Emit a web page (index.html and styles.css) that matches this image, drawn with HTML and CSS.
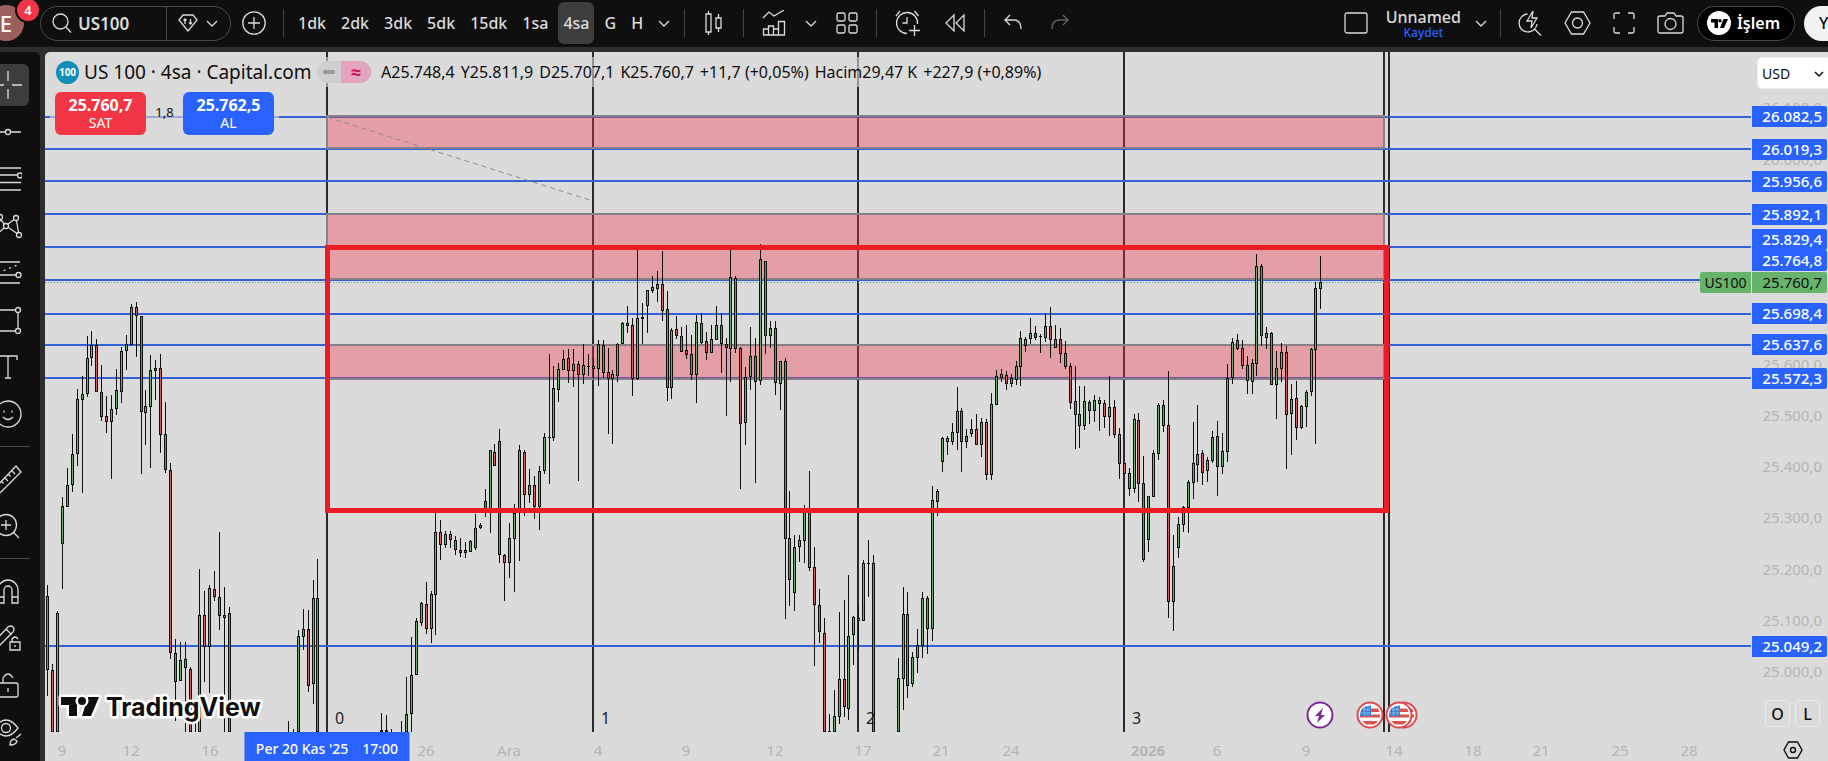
FILE: index.html
```html
<!DOCTYPE html>
<html lang="tr">
<head>
<meta charset="utf-8">
<title>US100 25.760,7</title>
<link rel="stylesheet" href="styles.css">
</head>
<body>
<header class="topbar">
  <button class="avatar" aria-label="Hesap">E<span class="badge">4</span></button>
  <div class="search">
    <button class="search-symbol">
      <svg width="20" height="22" viewBox="0 0 20 22"><circle cx="8.500" cy="9.500" r="7.500"/><path d="M14 15l5 5.500"/></svg>
      US100
    </button>
    <button class="search-more" aria-label="Semboller">
      <svg width="20" height="18" viewBox="0 0 20 18"><path d="M5 1h10l4 5-9 11L1 6z"/><path d="M7 10V5M5.500 6.500L7 5l1.500 1.500M12.500 5v5M11 8.500l1.500 1.500L14 8.500"/></svg>
      <svg width="12" height="12" viewBox="0 0 12 12"><path d="M1 4l5 5 5-5"/></svg>
    </button>
  </div>
  <button class="tool add" aria-label="Ekle"><svg width="24" height="24" viewBox="0 0 24 24"><circle cx="12" cy="12" r="11.200"/><path d="M12 6v12M6 12h12"/></svg></button>
  <i class="sep"></i>
  <button class="interval">1dk</button>
  <button class="interval">2dk</button>
  <button class="interval">3dk</button>
  <button class="interval">5dk</button>
  <button class="interval">15dk</button>
  <button class="interval">1sa</button>
  <button class="interval active">4sa</button>
  <button class="interval">G</button>
  <button class="interval">H</button>
  <button class="chev" aria-label="Aralıklar"><svg width="12" height="12" viewBox="0 0 12 12"><path d="M1 4l5 5 5-5"/></svg></button>
  <i class="sep"></i>
  <button class="tool" aria-label="Mumlar"><svg width="22" height="26" viewBox="0 0 22 26"><path d="M3 4h5v18H3zM5.500 1v3M5.500 22v3M13 8h5v10h-5zM15.500 4v4M15.500 18v4"/></svg></button>
  <i class="sep"></i>
  <button class="tool" aria-label="Göstergeler"><svg width="24" height="26" viewBox="0 0 24 26"><path d="M1 8l6-6 5 4 10-6M1.500 25v-6h5v6M6.500 25V16h5v9M11.500 25v-6h5M16.500 25V11.500h6V25zM1 25h21"/></svg></button>
  <button class="chev" aria-label="Favoriler"><svg width="12" height="12" viewBox="0 0 12 12"><path d="M1 4l5 5 5-5"/></svg></button>
  <button class="tool" aria-label="Şablonlar"><svg width="22" height="22" viewBox="0 0 22 22"><rect x="1" y="1" width="8" height="8" rx="1.500"/><rect x="13" y="1" width="8" height="8" rx="1.500"/><rect x="1" y="13" width="8" height="8" rx="1.500"/><rect x="13" y="13" width="8" height="8" rx="1.500"/></svg></button>
  <i class="sep"></i>
  <button class="tool" aria-label="Alarm"><svg width="26" height="26" viewBox="0 0 26 26"><path d="M12 23.500A10.500 10.500 0 1 1 22.500 14M12 7v6H7.500M1 6l4-5M23.500 6l-4-5M19.500 15v11M14 20.500h11"/></svg></button>
  <button class="tool" aria-label="Tekrar"><svg width="22" height="22" viewBox="0 0 22 22"><path d="M10 3v16L2 11zM20 3v16l-8-8z"/></svg></button>
  <i class="sep"></i>
  <button class="tool" aria-label="Geri al"><svg width="22" height="20" viewBox="0 0 22 20"><path d="M7 2L2 7l5 5M2 7h9c5 0 7 3 7 9"/></svg></button>
  <button class="tool dim" aria-label="Yinele"><svg width="22" height="20" viewBox="0 0 22 20"><path d="M15 2l5 5-5 5M20 7h-9c-5 0-7 3-7 9"/></svg></button>

  <div class="topbar-right">
    <button class="tool" aria-label="Yerleşim"><svg width="24" height="22" viewBox="0 0 24 22"><rect x="1" y="1" width="22" height="20" rx="2"/></svg></button>
    <button class="layout-name">Unnamed<span>Kaydet</span></button>
    <button class="chev" aria-label="Yerleşimler"><svg width="12" height="12" viewBox="0 0 12 12"><path d="M1 4l5 5 5-5"/></svg></button>
    <i class="sep"></i>
    <button class="tool" aria-label="Hızlı arama"><svg width="24" height="26" viewBox="0 0 24 26"><path d="M9.500 4A9 9 0 1 0 19 14M16.500 19l6.500 6.500M15 1l-6 10h5l-1 7 6-10h-5z"/></svg></button>
    <button class="tool" aria-label="Ayarlar"><svg width="27" height="24" viewBox="0 0 27 24"><path d="M7.500 1h12l6.500 11-6.500 11h-12L1 12z"/><circle cx="13.500" cy="12" r="5"/></svg></button>
    <button class="tool" aria-label="Tam ekran"><svg width="22" height="22" viewBox="0 0 22 22"><path d="M1 7V3q0-2 2-2h4M15 1h4q2 0 2 2v4M21 15v4q0 2-2 2h-4M7 21H3q-2 0-2-2v-4"/></svg></button>
    <button class="tool" aria-label="Fotoğraf"><svg width="27" height="22" viewBox="0 0 27 22"><path d="M3 4h5l2-3h7l2 3h5q2 0 2 2v13q0 2-2 2H3q-2 0-2-2V6q0-2 2-2z"/><circle cx="13.500" cy="12" r="5.500"/></svg></button>
    <button class="trade"><svg width="24" height="24" viewBox="0 0 24 24"><circle class="disc" cx="12" cy="12" r="12"/><path class="mark" d="M4 8h7v9H7.500v-5.500H4z"/><circle class="mark" cx="13" cy="9.700" r="1.700"/><path class="mark" d="M16.500 8h4.500l-4 9h-4z"/></svg>İşlem</button>
    <button class="publish">Yayınla</button>
  </div>
</header>

<main class="workspace">
  <nav class="drawbar" aria-label="Çizim araçları">
    <button class="draw active" aria-label="İmleç"><svg viewBox="0 0 28 28"><path d="M14 0v10M14 18v10M0 14h10M18 14h10"/></svg></button>
    <button class="draw" aria-label="Çizgi"><svg viewBox="0 0 28 28"><path d="M0 14h11M17 14h10"/><circle cx="14" cy="14" r="2.500"/></svg></button>
    <button class="draw" aria-label="Fibonacci"><svg viewBox="0 0 28 28"><path d="M1 3h26M1 10h23M1 17.500h26M1 25h26"/><circle cx="26" cy="10.500" r="2.500"/></svg></button>
    <button class="draw" aria-label="Formasyon"><svg viewBox="0 0 28 28"><circle cx="6" cy="5" r="2.500"/><circle cx="12" cy="14" r="2.500"/><circle cx="22" cy="6" r="2.500"/><circle cx="25" cy="23" r="2.500"/><path d="M6 8L1 24l9-8M6.500 7.500l4 4.500M14 12l6-4.500M14.500 15.500l8.500 6M22.500 8.500l2 12"/></svg></button>
    <button class="draw" aria-label="Tahmin"><svg viewBox="0 0 28 28"><path d="M1 3h25M1 16h21M1 24h25"/><circle cx="24.500" cy="16" r="2.500"/><path class="dots" d="M4 14L26 5"/></svg></button>
    <button class="draw" aria-label="Şekil"><svg viewBox="0 0 28 28"><path d="M2 4h19M2 25h19M24 7v15"/><circle cx="24" cy="4" r="2.500"/><circle cx="24" cy="25" r="2.500"/></svg></button>
    <button class="draw" aria-label="Metin"><svg viewBox="0 0 28 28"><path d="M5 7V3h18v4M14 3v22M11 25h6"/></svg></button>
    <button class="draw" aria-label="Simge"><svg viewBox="0 0 28 28"><circle cx="14" cy="14" r="13"/><path d="M9 17q5 5 10 0M10 10.500v2M18 10.500v2"/></svg></button>
    <hr>
    <button class="draw" aria-label="Ölçüm"><svg viewBox="0 0 28 28"><path d="M1 23L22 1l5 6L6 28zM11 13l3 3M14.500 9.500l2 2M18 6l3 3M7.500 16.500l2 2"/></svg></button>
    <button class="draw" aria-label="Yakınlaştır"><svg viewBox="0 0 28 28"><circle cx="12" cy="13" r="10.500"/><path d="M12 8v10M7 13h10M19 20l6 6"/></svg></button>
    <hr>
    <button class="draw" aria-label="Mıknatıs"><svg viewBox="0 0 28 28"><path d="M4 26V13a10 10 0 0 1 20 0v13h-6V13a4 4 0 0 0-8 0v13zM4 20h6M18 20h6"/></svg></button>
    <button class="draw" aria-label="Çizim kipi"><svg viewBox="0 0 28 28"><path d="M0 18L14 3q3-2 5 0t0 5L5 22M12 5l5 5M16 18h10v8H16zM18 18v-3q3-4 6 0M21 21v2"/></svg></button>
    <button class="draw" aria-label="Kilitle"><svg viewBox="0 0 28 28"><rect x="4" y="12" width="20" height="14" rx="2"/><path d="M9 12V7q5-8 10 0M14 17v4"/></svg></button>
    <button class="draw" aria-label="Gizle"><svg viewBox="0 0 28 28"><path d="M0 10Q12-6 24 10 12 26 0 10z"/><circle cx="12" cy="10" r="4.500"/><path d="M16 27q0-5 4-6l3 2q-1 4-7 4zM22 20l5-4"/></svg></button>
  </nav>

  <section class="chart">
    <div class="pane">
      <svg class="plot" id="plot" viewBox="45 52 1706 680" preserveAspectRatio="none"></svg>
      <div id="cycles"></div>

      <div class="legend">
        <span class="symbol-logo">100</span>
        <span class="symbol-title">US 100 · 4sa · Capital.com</span>
        <span class="status"><i class="dash"></i><b>≈</b></span>
        <span class="ohlc"><span>A25.748,4</span><span>Y25.811,9</span><span>D25.707,1</span><span>K25.760,7</span><span>+11,7 (+0,05%)</span><span>Hacim29,47 K</span><span>+227,9 (+0,89%)</span></span>
      </div>
      <div class="orders">
        <button class="order sell"><b>25.760,7</b>SAT</button>
        <span class="spread">1,8</span>
        <button class="order buy"><b>25.762,5</b>AL</button>
      </div>

      <svg class="tv-logo" width="210" height="38" viewBox="0 0 210 38">
        <path d="M4 6h16v19h-8V14H4zM31 6h11l-8 19h-9z"/><circle cx="25" cy="10" r="4"/>
        <text x="49" y="25">TradingView</text>
      </svg>

      <div class="events" id="events">
        <svg class="event" style="left:74.730%" viewBox="0 0 28 28"><circle cx="14" cy="14" r="12.500" fill="#fff" stroke="#7b2d96" stroke-width="2"/><path d="M17 7l-8 8h4l-2 7 8-8h-4z" fill="#7b2d96"/></svg>
        <svg class="event" style="left:77.670%" viewBox="0 0 28 28"><use href="#flag"/></svg>
        <svg class="event" style="left:79.660%" viewBox="0 0 28 28"><use href="#flag"/></svg>
        <svg class="event" style="left:79.370%" viewBox="0 0 28 28"><g id="flag"><circle cx="14" cy="14" r="12.500" fill="#fff" stroke="#dd4a50" stroke-width="2"/><path d="M4.500 11h19a10 10 0 0 0-1.500-3.500H6zM4 13.500h20v3H4zM6 20h16a10 10 0 0 1-4 3.500h-8z" fill="#d8524f"/><path d="M4 15a10 10 0 0 1 10-10.500h1V15z" fill="#3b83d6"/><path d="M7 8.500h8M5 12h10M8.500 6.500V15M12 5v10" stroke="#a9cdf5" stroke-width="1" stroke-dasharray="1 1"/></g></svg>
      </div>
      <span class="last-symbol">US100</span>
    </div>

    <div class="price-axis">
      <div id="prices"></div>
      <div class="currency">
        <select aria-label="Para birimi"><option>USD</option></select>
        <svg width="10" height="8" viewBox="0 0 10 8"><path d="M1 2l4 4 4-4"/></svg>
      </div>
      <div class="scale-modes"><button>O</button><button>L</button></div>
    </div>

    <div class="time-axis" id="times"></div>
    <div class="axis-corner"><button aria-label="Eksen ayarları"><svg width="20" height="18" viewBox="0 0 20 18"><path d="M5.500 1h9L19 9l-4.500 8h-9L1 9z"/><circle cx="10" cy="9" r="2.500"/></svg></button></div>
  </section>
</main>
<script src="chart.js"></script>
</body>
</html>
```

FILE: styles.css
```css
* { box-sizing: border-box; }
html, body { height: 100%; }
body {
  margin: 0;
  display: flex;
  flex-direction: column;
  overflow: hidden;
  background: #2e2e2e;
  color: #0f0f0f;
  font-family: "Noto Sans", "Open Sans", sans-serif;
  font-size: 15px;
}
button { border: 0; padding: 0; background: none; color: inherit; font: inherit; cursor: pointer; }
svg { display: block; flex: none; }

/* top toolbar */
.topbar {
  display: flex;
  align-items: center;
  gap: 5px;
  flex: none;
  height: 47px;
  padding-bottom: 1px;
  overflow: hidden;
  background: #0f0f0f;
  color: #dbdbdb;
  font-size: 16px;
  font-weight: 500;
}
.topbar svg, .drawbar svg { fill: none; stroke: #dbdbdb; stroke-width: 1.3; }
.topbar button { flex: none; }
.avatar {
  position: relative;
  width: 36px;
  height: 36px;
  margin-left: -12px;
  border-radius: 50%;
  background: #9c5f60;
  color: #fff;
  font-size: 22px;
}
.badge {
  position: absolute;
  top: -6px;
  right: -15px;
  width: 22px;
  height: 22px;
  border-radius: 50%;
  background: #f23645;
  box-shadow: 0 0 0 2px #0f0f0f;
  font-size: 13px;
  line-height: 22px;
  font-weight: 600;
}
.search {
  display: flex;
  flex: none;
  height: 35px;
  margin-left: 11px;
  border: 1px solid #4a4a4a;
  border-radius: 18px;
}
.search-symbol { display: flex; align-items: center; gap: 6px; width: 125px; padding-left: 11px; font-size: 17px; font-weight: 600; }
.search-more { display: flex; align-items: center; gap: 8px; width: 64px; padding-left: 11px; border-left: 1px solid #4a4a4a; }
.tool { padding: 0 9px; height: 42px; }
.add { padding: 0 8px 0 6px; }
.dim { opacity: .4; }
.sep { flex: none; width: 1px; height: 28px; margin: 0 4px; background: #434343; }
.interval { height: 42px; padding: 0 5px; border-radius: 6px; }
.interval.active { background: #3d3d3d; }
.chev { padding: 0 5px; height: 42px; }
.topbar-right { display: flex; align-items: center; gap: 4px; margin-left: auto; }
.layout-name { padding: 0 5px; line-height: 18px; }
.layout-name span { display: block; color: #2962ff; font-size: 12px; line-height: 13px; }
.trade {
  display: flex;
  align-items: center;
  gap: 6px;
  height: 35px;
  padding: 0 14px 0 9px;
  border: 1px solid #4a4a4a;
  border-radius: 18px;
  background: #000;
  color: #fff;
  font-weight: 600;
}
.topbar .disc { fill: #fff; stroke: none; }
.topbar .mark { fill: #000; stroke: none; }
.publish {
  height: 35px;
  margin-left: 5px;
  margin-right: -66px;
  width: 90px;
  padding-left: 15px;
  border-radius: 18px;
  background: #f2f2f2;
  color: #0f0f0f;
  text-align: left;
}

/* left toolbar */
.workspace { display: flex; flex: 1; min-height: 0; gap: 5px; padding-top: 5px; }
.drawbar {
  display: flex;
  flex-direction: column;
  gap: 5px;
  flex: none;
  width: 40px;
  padding-top: 12px;
  overflow: hidden;
  border-top-right-radius: 5px;
  background: #0f0f0f;
}
.draw { display: flex; align-items: center; justify-content: center; flex: none; width: 42px; height: 42px; margin-left: -13px; border-radius: 6px; }
.draw.active { background: #3d3d3d; }
.draw svg { width: 28px; height: 28px; }
.draw .dots { stroke-dasharray: 2 4; }
.drawbar hr { flex: none; width: 30px; height: 1px; margin: 6px 0; border: 0; background: #4a4a4a; }

/* chart */
.chart {
  display: grid;
  grid-template-columns: 1fr 77px;
  grid-template-rows: 1fr 29px;
  flex: 1;
  min-width: 0;
  overflow: hidden;
  border-top-left-radius: 5px;
  background: #dbdbdb;
}
.pane, .price-axis, .time-axis { position: relative; min-width: 0; min-height: 0; }
.plot { position: absolute; width: 100%; height: 100%; shape-rendering: crispEdges; }
.cycle { position: absolute; bottom: 5px; padding-left: 8px; color: #222; font-size: 16px; line-height: 18px; }

.legend { position: relative; display: flex; align-items: center; width: max-content; height: 30px; margin-top: 5px; padding-left: 11px; background: rgba(219, 219, 219, .6); white-space: nowrap; }
.symbol-logo { width: 23px; height: 23px; border-radius: 50%; background: #118fb5; color: #fff; font-size: 10px; font-weight: 700; line-height: 23px; text-align: center; }
.symbol-title { width: 238px; padding-left: 5px; font-size: 19px; }
.status { display: flex; width: 54px; height: 22px; margin-right: 10px; border-radius: 11px; overflow: hidden; background: #cfcfcf; }
.dash { width: 12px; height: 4px; margin: 9px 6px; border-radius: 2px; background: #999; }
.status b { flex: 1; background: #e5a5bf; color: #d0125f; font-size: 18px; line-height: 22px; text-align: center; }
.ohlc { display: flex; gap: 6px; font-size: 16px; }

.orders { position: relative; display: inline-flex; align-items: center; margin: 2px 0 0 5px; padding: 3px 5px; background: rgba(219, 219, 219, .6); }
.order { display: flex; flex-direction: column; align-items: center; justify-content: center; width: 91px; height: 43px; border-radius: 6px; color: #fff; font-size: 14px; line-height: 17px; }
.order b { font-size: 16px; line-height: 18px; }
.sell { background: #f23645; }
.buy { background: #2962ff; }
.spread { width: 37px; padding-bottom: 4px; font-size: 13px; text-align: center; }

.tv-logo { position: absolute; left: 12px; bottom: 3px; fill: #0f0f0f; stroke: #fff; stroke-width: 5px; paint-order: stroke; stroke-linejoin: round; }
.tv-logo text { font: 700 25px Inter, sans-serif; }
.event { position: absolute; bottom: 3px; width: 28px; height: 28px; margin-left: -14px; }
.last-symbol { position: absolute; right: 0; top: 32.350%; width: 51px; height: 21px; border-radius: 2px 0 0 2px; background: #67b36b; font-size: 14px; line-height: 21px; text-align: center; }

.price { position: absolute; left: 1px; width: 75px; height: 21px; margin-top: -11px; padding-right: 5px; color: #b5b5b5; line-height: 21px; text-align: right; }
.price.tag { border-radius: 0 2px 2px 0; background: #2962ff; color: #fff; font-weight: 500; }
.price.last { margin-top: -10px; border-radius: 0 2px 2px 0; background: #67b36b; color: #0f0f0f; }
.currency { position: absolute; top: 5px; left: 6px; right: -4px; }
.currency select { width: 100%; height: 32px; padding: 0 4px; appearance: none; border: 1px solid #eee; border-radius: 5px; background: #fff; color: #0f0f0f; font: inherit; font-size: 14px; }
.currency svg { position: absolute; top: 13px; right: 8px; fill: none; stroke: #0f0f0f; stroke-width: 1.5; pointer-events: none; }
.scale-modes { position: absolute; right: 8px; bottom: 5px; display: flex; gap: 5px; }
.scale-modes button { width: 25px; height: 27px; border: 1px solid #ebebeb; border-radius: 4px; font-size: 16px; font-weight: 500; }

.time { position: absolute; top: 8px; transform: translateX(-50%); color: #b5b5b5; line-height: 20px; white-space: nowrap; }
.time.strong { font-weight: 700; }
.time.tag { top: 0; display: flex; justify-content: center; gap: 14px; width: 165px; height: 29px; background: #2962ff; color: #fff; font-size: 14px; font-weight: 500; line-height: 34px; }
.axis-corner { display: flex; align-items: center; justify-content: center; padding: 6px 0 0 6px; }
.axis-corner svg { fill: none; stroke: #0f0f0f; stroke-width: 1.4; }
```

FILE: chart.js
```js
// plot coordinates: x 45..1751, y 52..732
var LEFT = 45, TOP = 52, W = 1706, H = 680;

var levels = [26082.5, 26019.3, 25956.6, 25892.1, 25829.4, 25764.8, 25698.4, 25637.6, 25572.3, 25049.2];
var moved = { 25829.4: 240, 25764.8: 261 };   // tags pushed up so that they do not collide
var zones = [[116, 149], [214, 280], [345, 380]];
var cycles = [327, 593, 858, 1124];
var times = [[62, '9'], [131, '12'], [210, '16'], [426, '26'], [509, 'Ara'], [598, '4'], [686, '9'], [775, '12'],
  [863, '17'], [941, '21'], [1011, '24'], [1148, '2026'], [1217, '6'], [1306, '9'], [1394, '14'], [1473, '18'],
  [1541, '21'], [1620, '25'], [1689, '28']];

// x, high, body top, body bottom, low, 1 = up / 0 = down
var candles = [
  [47,585,596,670,696,0],[52,664,670,732,732,0],[57,611,613,732,732,1],[62,497,506,544,589,1],
  [67,468,485,507,507,1],[72,434,454,485,492,1],[77,389,399,454,466,1],[82,376,394,400,493,1],
  [87,336,358,394,397,1],[91,331,345,358,366,1],[96,339,345,392,392,0],[101,365,392,417,421,0],
  [106,396,416,422,433,0],[111,395,409,422,479,1],[116,369,390,409,415,1],[121,347,351,392,403,1],
  [126,335,344,351,370,1],[131,304,307,345,345,1],[136,302,307,316,357,0],[141,316,316,412,474,0],
  [145,390,406,413,445,1],[150,355,370,407,468,1],[155,360,368,371,400,1],[160,354,368,435,453,0],
  [165,402,434,470,473,0],[170,463,470,653,659,0],[175,639,653,682,721,0],[180,642,660,681,681,1],
  [185,642,659,668,732,0],[190,667,669,732,732,0],[195,705,732,732,732,0],[199,569,615,732,732,1],
  [204,591,615,647,682,0],[209,585,588,647,693,1],[214,571,589,597,601,0],[219,532,597,616,630,0],
  [224,587,615,618,732,1],[229,607,613,732,732,0],[288,721,732,732,732,1],[293,729,732,732,732,1],
  [298,630,636,732,732,1],[303,609,629,637,650,1],[308,610,629,686,692,0],[313,580,598,684,704,1],
  [317,559,598,732,732,0],
  [381,713,730,732,732,1],[386,715,730,732,732,1],[391,729,732,732,732,1],[401,721,732,732,732,1],
  [406,677,714,732,732,1],[411,637,675,714,732,1],[416,618,621,675,675,1],[421,602,603,623,626,1],
  [426,582,604,629,634,0],[431,591,594,629,643,1],[435,512,532,595,635,1],[440,520,532,545,560,0],
  [445,531,534,545,548,1],[450,531,534,540,548,0],[455,536,540,550,555,0],[460,538,550,553,557,0],
  [465,542,550,553,558,1],[470,540,541,552,552,1],[475,514,528,548,550,1],[480,523,525,528,529,1],
  [485,489,501,510,517,0],[490,450,450,510,533,1],[494,444,452,466,466,0],[499,429,441,555,563,0],
  [504,554,555,563,601,0],[509,523,538,563,578,1],[514,504,513,539,592,1],[519,445,450,509,561,1],
  [524,450,452,495,516,0],[529,469,485,495,503,1],[534,476,485,507,519,0],[539,466,471,507,530,1],
  [544,433,437,471,474,1],[549,354,437,437,484,1],[553,366,388,438,441,1],[558,363,369,390,402,1],
  [563,350,359,370,370,1],[568,349,358,371,383,0],[573,349,364,371,387,1],[578,361,364,375,481,0],
  [583,344,365,375,384,1],[588,354,366,366,376,1],[593,359,366,369,379,1],[598,340,344,369,386,1],
  [603,340,345,373,378,0],[608,348,372,379,434,0],[612,370,374,379,444,1],[617,343,344,376,382,1],
  [622,322,323,344,344,1],[627,306,323,326,333,1],[632,318,325,379,396,0],[637,250,318,379,380,1],
  [642,303,317,319,344,1],[647,290,290,306,333,1],[652,276,287,291,293,1],[657,271,284,289,302,1],
  [662,251,284,311,321,0],[667,291,309,388,401,0],[671,328,330,388,399,1],[676,316,329,336,339,0],
  [681,327,336,352,352,0],[686,325,350,355,359,0],[691,335,354,375,380,0],[696,315,322,375,403,1],
  [701,313,323,343,344,0],[706,332,341,353,360,0],[711,325,339,353,353,1],[716,306,325,340,340,1],
  [721,313,325,344,373,0],[726,338,344,348,416,0],[730,250,277,349,382,1],[735,276,278,349,353,0],
  [740,347,348,424,489,0],[745,367,377,423,445,1],[750,327,356,377,390,1],[755,338,356,382,483,0],
  [760,244,259,381,385,1],[765,261,261,336,354,0],[770,321,328,336,348,1],[775,321,328,383,395,0],
  [780,361,361,384,410,1],[785,358,361,539,619,0],[789,491,538,580,606,0],[794,535,547,593,611,1],
  [799,535,540,547,562,1],[804,505,510,541,563,1],[809,471,510,568,571,0],[814,547,567,605,666,0],
  [819,589,605,632,643,0],[824,618,633,732,732,0],[829,714,731,732,732,1],[834,690,716,732,732,1],
  [839,612,679,717,724,1],[844,600,679,707,717,0],[848,575,636,709,720,1],[853,616,617,635,665,1],
  [858,606,618,621,651,1],[863,560,563,621,621,1],[868,540,563,563,597,1],[873,555,563,732,732,0],
  [898,658,678,732,732,1],[903,587,614,679,710,1],[907,592,614,686,698,0],[912,652,657,684,687,1],
  [917,629,645,658,673,1],[922,592,598,646,658,1],[927,596,598,629,654,0],[932,486,500,629,641,1],
  [937,489,491,502,516,1],[942,437,438,462,472,1],[947,436,438,442,455,1],[952,423,432,442,445,1],
  [957,387,411,433,450,1],[961,408,411,442,472,0],[966,429,436,442,448,1],[971,419,429,434,437,1],
  [976,414,429,445,445,0],[981,418,422,445,457,1],[986,419,422,475,480,0],[991,393,404,475,480,1],
  [996,370,376,405,405,1],[1001,369,374,378,382,1],[1006,371,375,384,390,0],[1011,374,378,384,387,1],
  [1016,361,366,380,385,1],[1020,331,338,367,386,1],[1025,337,339,346,352,0],[1030,318,333,339,344,1],
  [1035,326,333,338,340,0],[1040,334,336,336,353,1],[1045,313,326,338,342,1],[1050,307,326,340,358,0],
  [1055,325,339,348,348,0],[1060,328,339,354,363,0],[1065,341,353,367,369,0],[1070,363,366,403,409,0],
  [1075,366,401,415,449,0],[1079,386,414,426,448,0],[1084,386,401,426,430,1],[1089,400,402,411,424,0],
  [1094,395,400,411,422,1],[1099,397,400,404,431,0],[1104,400,403,417,428,0],[1109,376,407,417,436,1],
  [1114,400,407,435,438,0],[1119,428,434,464,479,0],[1124,463,463,474,474,0],[1129,468,473,489,496,0],
  [1134,414,419,489,493,1],[1138,413,420,484,502,0],[1143,456,483,560,562,0],[1148,496,496,540,552,1],
  [1153,450,453,497,497,1],[1158,403,405,454,460,1],[1163,400,405,426,432,0],[1168,371,425,602,618,0],
  [1173,535,566,602,631,1],[1178,517,524,548,558,1],[1183,506,507,525,532,1],[1188,480,482,508,533,1],
  [1193,422,463,483,499,1],[1197,405,454,465,482,1],[1202,450,453,473,485,0],[1207,457,460,471,482,1],
  [1212,431,437,461,463,1],[1217,421,436,467,496,0],[1222,433,451,467,474,1],[1227,364,378,452,462,1],
  [1232,338,342,378,384,1],[1237,334,340,349,350,0],[1242,340,348,366,369,0],[1247,356,365,381,394,0],
  [1252,359,363,382,394,1],[1256,254,266,364,376,1],[1261,264,266,336,346,0],[1266,327,333,338,349,1],
  [1271,332,333,385,385,0],[1276,351,368,385,419,1],[1281,343,352,369,382,1],[1286,346,352,415,469,0],
  [1291,384,399,414,455,1],[1296,381,398,428,440,0],[1301,405,406,428,429,1],[1306,390,392,407,427,1],
  [1311,348,349,392,396,1],[1315,282,288,350,444,1],[1320,256,282,289,309,1]
];

function y(price) { return 672 - (price - 25000) * 0.5124; }
function tr(price) { return price.toFixed(1).replace('.', ',').replace(/(\d)(\d{3},)/, '$1.$2'); }
function rect(x, y, w, h, attrs) {
  return '<rect x="' + x + '" y="' + y + '" width="' + w + '" height="' + h + '" ' + attrs + '/>';
}

var out = '';
cycles.concat([1384, 1389]).forEach(function (x) { out += rect(x - 1, TOP, 2, H, 'fill="#2a2a2c"'); });
levels.forEach(function (p) { out += rect(LEFT, Math.floor(y(p)) - 1, W, 2, 'fill="#3263d6"'); });
zones.forEach(function (z) {
  out += rect(327, z[0], 1057, z[1] - z[0] - 1, 'fill="#f23645" fill-opacity=".36" stroke="#85808a" stroke-width="2"');
});
out += '<path d="M45 282.500H1751" stroke="#4f94c4" stroke-dasharray="1 2"/>';
out += '<path d="M327 117L593 201" stroke="#98868b" stroke-dasharray="5 4" shape-rendering="auto"/>';

candles.forEach(function (c) {
  out += rect(c[0], c[1], 1, c[4] - c[1], 'fill="#0f0f0f"');
  out += rect(c[0] - 1, c[2], 3, Math.max(1, c[3] - c[2]), 'fill="#0c120c"');
  if (c[3] - c[2] > 2) out += rect(c[0], c[2] + 1, 1, c[3] - c[2] - 2, c[5] ? 'fill="#6fae70"' : 'fill="#cf5f62"');
});
out += '<rect x="327.500" y="247.500" width="1059" height="263" fill="none" stroke="#ed1c24" stroke-width="5"/>';
document.getElementById('plot').innerHTML = out;

document.getElementById('cycles').innerHTML = cycles.map(function (x, i) {
  return '<span class="cycle" style="left:' + (x - LEFT) / W * 100 + '%">' + i + '</span>';
}).join('');

function priceLabel(p, py, cls) {
  return '<span class="price ' + cls + '" style="top:' + (py - TOP) / H * 100 + '%">' + tr(p) + '</span>';
}
var labels = '';
for (var p = 26100; p >= 25000; p -= 100) labels += priceLabel(p, y(p), '');
levels.forEach(function (p) { labels += priceLabel(p, moved[p] || y(p), 'tag'); });
labels += priceLabel(25760.7, 282, 'last');
document.getElementById('prices').innerHTML = labels;

document.getElementById('times').innerHTML = times.map(function (t) {
  return '<span class="time' + (t[1] === '2026' ? ' strong' : '') + '" style="left:' + (t[0] - LEFT) / W * 100 + '%">' + t[1] + '</span>';
}).join('') + '<span class="time tag" style="left:' + (327 - LEFT) / W * 100 + '%"><span>Per 20 Kas \'25</span><span>17:00</span></span>';
```
